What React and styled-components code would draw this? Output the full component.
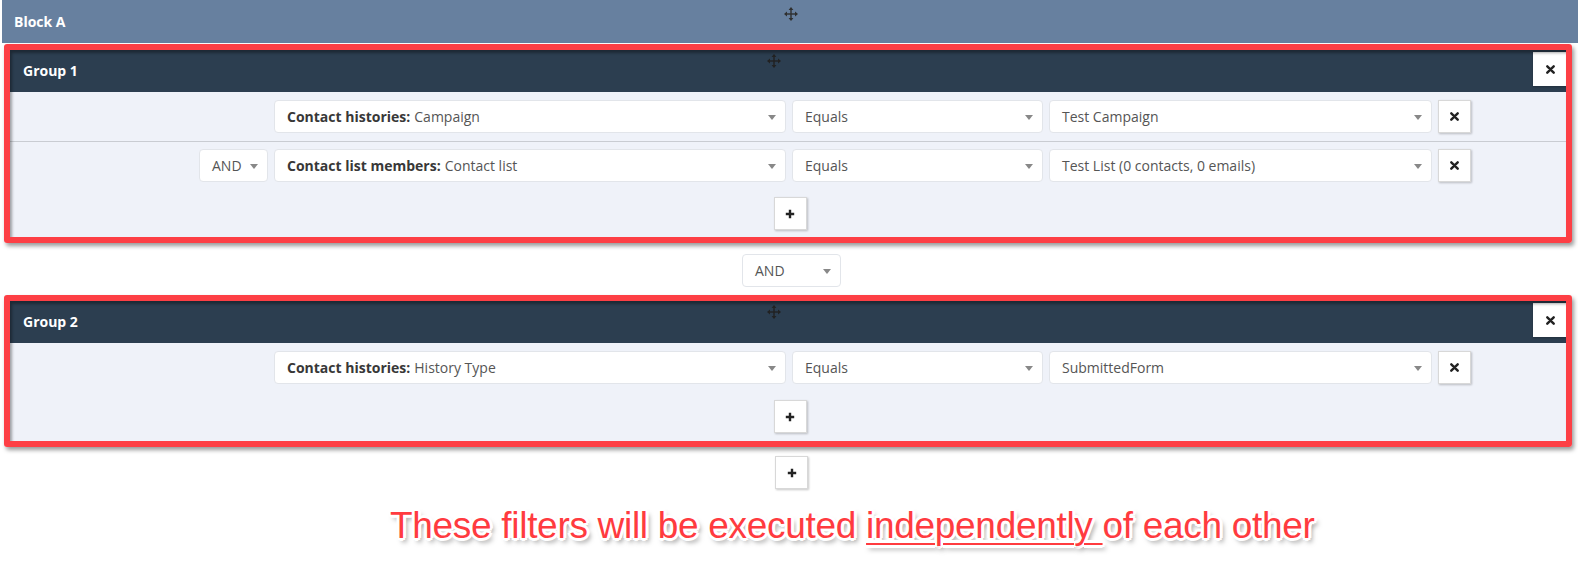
import React from "react";
import styled, { createGlobalStyle } from "styled-components";

const GlobalStyle = createGlobalStyle`
  html, body {
    margin: 0;
    padding: 0;
    background: #fff;
  }
  body {
    font-family: "Open Sans", "Liberation Sans", sans-serif;
  }
`;

const Page = styled.div`
  width: 1578px;
  height: 580px;
  overflow: hidden;
  display: flex;
  flex-direction: column;
`;

const BlockBar = styled.div`
  position: relative;
  height: 43px;
  margin-left: 2px;
  padding-left: 12px;
  background: #67809f;
  color: #fff;
  font-size: 14px;
  font-weight: 700;
  display: flex;
  align-items: center;
`;

const Handle = styled.span`
  position: absolute;
  top: ${(p) => p.$top}px;
  left: calc(50% + ${(p) => p.$shift}px);
  display: flex;
  color: ${(p) => p.$color};
`;

const GroupWrap = styled.div`
  position: relative;
  margin: ${(p) => p.$top}px 11px 0 10px;
`;

// red annotation rectangle drawn over the group
const Marker = styled.div`
  position: absolute;
  top: -5px;
  left: -6px;
  right: -5px;
  bottom: -6px;
  border: 6px solid #fd3f45;
  border-radius: 3px;
  pointer-events: none;
  box-shadow: 2px 3px 4px rgba(0, 0, 0, 0.4), inset 2px 3px 3px rgba(0, 0, 0, 0.35);
`;

const Group = styled.div`
  background: #eff2f9;
`;

const GroupHeader = styled.div`
  position: relative;
  height: 43px;
  padding-left: 13px;
  background: #2c3e50;
  color: #fff;
  font-size: 14px;
  font-weight: 700;
  display: flex;
  align-items: center;
  justify-content: space-between;
`;

const HeaderClose = styled.button`
  width: 34px;
  height: 34px;
  border: none;
  background: #fff;
  box-shadow: 0 1px 2px rgba(0, 0, 0, 0.25);
  display: flex;
  align-items: center;
  justify-content: center;
  padding: 0;
  align-self: flex-start;
  margin-top: 3px;
`;

const RuleRow = styled.div`
  display: grid;
  grid-template-columns: 69px 512px 251px 383px 33px;
  column-gap: 6px;
  padding: ${(p) => (p.$first ? "8px" : "7px")} 0 8px 189px;
  border-top: ${(p) => (p.$first ? "none" : "1px solid #c9ccd2")};
`;

const Select = styled.div`
  position: relative;
  height: 33px;
  box-sizing: border-box;
  padding: 0 28px 0 12px;
  background: #fff;
  border: 1px solid #e2e5ea;
  border-radius: 4px;
  font-size: 14px;
  color: #555;
  white-space: nowrap;
  overflow: hidden;
  display: flex;
  align-items: center;
  width: ${(p) => (p.$width ? `${p.$width}px` : "auto")};

  b {
    color: #383838;
    font-weight: 700;
    margin-right: 4px;
  }

  &::after {
    content: "";
    position: absolute;
    right: 9px;
    top: 50%;
    margin-top: -2px;
    border-left: 4px solid transparent;
    border-right: 4px solid transparent;
    border-top: 5px solid #888;
  }
`;

const IconButton = styled.button`
  width: 33px;
  height: 33px;
  padding: 0;
  box-sizing: border-box;
  background: #fff;
  border: 1px solid #d8d8d8;
  box-shadow: 1px 1px 2px rgba(0, 0, 0, 0.22);
  display: flex;
  align-items: center;
  justify-content: center;
`;

const AddRow = styled.div`
  display: flex;
  justify-content: center;
  padding: ${(p) => p.$pad}px 0;
  padding-left: 3px;
`;

const Between = styled.div`
  display: flex;
  justify-content: center;
  margin-top: ${(p) => p.$top}px;
  padding-left: 5px;
`;

const Caption = styled.div`
  margin-top: 16px;
  padding-left: 390px;
  font-family: "Liberation Sans", Arial, sans-serif;
  font-size: 37px;
  letter-spacing: -0.3px;
  line-height: 42px;
  color: #ff3b3f;
  white-space: nowrap;
  text-shadow: -2px -2px 0 #fff, 2px -2px 0 #fff, -2px 2px 0 #fff, 2px 2px 0 #fff,
    0 -3px 0 #fff, 0 3px 0 #fff, -3px 0 0 #fff, 3px 0 0 #fff,
    3px 4px 5px rgba(0, 0, 0, 0.5);

  u {
    text-decoration: underline;
    text-decoration-thickness: 2px;
    text-underline-offset: 5px;
  }
`;

const MoveIcon = () => (
  <svg width="14" height="14" viewBox="0 0 14 14" fill="currentColor">
    <rect x="6.3" y="2" width="1.4" height="10" />
    <rect x="2" y="6.3" width="10" height="1.4" />
    <polygon points="7,0 4.6,3 9.4,3" />
    <polygon points="7,14 4.6,11 9.4,11" />
    <polygon points="0,7 3,4.6 3,9.4" />
    <polygon points="14,7 11,4.6 11,9.4" />
  </svg>
);

const TimesIcon = () => (
  <svg width="9" height="9" viewBox="0 0 9 9">
    <path d="M1.3 1.3 L7.7 7.7 M7.7 1.3 L1.3 7.7" stroke="#222" strokeWidth="2.4" strokeLinecap="round" />
  </svg>
);

const PlusIcon = () => (
  <svg width="10" height="10" viewBox="0 0 10 10">
    <path d="M5 0.8 V9.2 M0.8 5 H9.2" stroke="#222" strokeWidth="2.4" />
  </svg>
);

function Rule({ first, joiner, field, prop, value }) {
  return (
    <RuleRow $first={first}>
      {joiner ? <Select>{joiner}</Select> : <span />}
      <Select>
        <b>{field}:</b>
        {prop}
      </Select>
      <Select>Equals</Select>
      <Select>{value}</Select>
      <IconButton>
        <TimesIcon />
      </IconButton>
    </RuleRow>
  );
}

function FilterGroup({ title, rules, top, addPad }) {
  return (
    <GroupWrap $top={top}>
      <Group>
        <GroupHeader>
          {title}
          <Handle $top={5} $shift={-22} $color="#222">
            <MoveIcon />
          </Handle>
          <HeaderClose>
            <TimesIcon />
          </HeaderClose>
        </GroupHeader>
        {rules.map((r, i) => (
          <Rule key={i} first={i === 0} {...r} />
        ))}
        <AddRow $pad={addPad}>
          <IconButton>
            <PlusIcon />
          </IconButton>
        </AddRow>
      </Group>
      <Marker />
    </GroupWrap>
  );
}

const groupOne = [
  { field: "Contact histories", prop: "Campaign", value: "Test Campaign" },
  {
    joiner: "AND",
    field: "Contact list members",
    prop: "Contact list",
    value: "Test List (0 contacts, 0 emails)",
  },
];

const groupTwo = [
  { field: "Contact histories", prop: "History Type", value: "SubmittedForm" },
];

export default function App() {
  return (
    <Page>
      <GlobalStyle />
      <BlockBar>
        Block A
        <Handle $top={7} $shift={-6} $color="#2f2f2f">
          <MoveIcon />
        </Handle>
      </BlockBar>
      <FilterGroup title="Group 1" rules={groupOne} top={6} addPad={7} />
      <Between $top={17}>
        <Select $width={99}>AND</Select>
      </Between>
      <FilterGroup title="Group 2" rules={groupTwo} top={13} addPad={8} />
      <Between $top={15}>
        <IconButton>
          <PlusIcon />
        </IconButton>
      </Between>
      <Caption>
        These filters will be executed <u>independently </u>of each other
      </Caption>
    </Page>
  );
}
